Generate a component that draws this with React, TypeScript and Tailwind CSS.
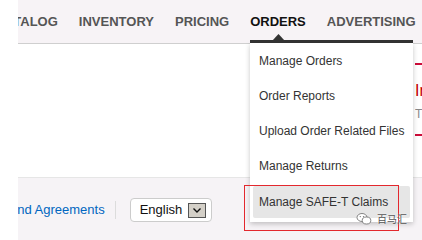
import React from "react";

const navFont = { fontFamily: '"Liberation Sans", Arial, sans-serif' };

export default function App() {
  const items = [
    "Manage Orders",
    "Order Reports",
    "Upload Order Related Files",
    "Manage Returns",
  ];
  return (
    <div
      className="relative w-[422px] h-[240px] overflow-hidden bg-white flex"
      style={navFont}
    >
      <div className="w-[18px] shrink-0 bg-white" />
      <div className="flex-1 flex flex-col overflow-hidden">
        {/* Nav bar */}
        <div className="h-[44px] shrink-0 bg-[#f7f3f6] border-b border-[#cfcfcf] flex items-center overflow-hidden">
          <div className="flex items-center gap-[21px] ml-[-22.5px] text-[13px] font-bold text-[#555] whitespace-nowrap">
            <span>CATALOG</span>
            <span>INVENTORY</span>
            <span>PRICING</span>
            <span className="text-[#111]">ORDERS</span>
            <span>ADVERTISING</span>
          </div>
        </div>
        {/* Main content */}
        <div className="h-[133px] shrink-0 flex">
          <div className="w-[397px] shrink-0" />
          <div className="flex-1 flex flex-col overflow-hidden whitespace-nowrap">
            <div className="h-[2px] bg-[#cc0c39] mt-[19px]" />
            <div className="text-[16px] text-[#c40000] leading-[18px] mt-[17px]">
              Important
            </div>
            <div className="text-[12px] text-[#888] leading-[14px] mt-[7px]">
              The
            </div>
            <div className="h-[2px] bg-[#cc0c39] mt-[13px]" />
          </div>
        </div>
        {/* Footer */}
        <div className="flex-1 bg-[#f6f3f6] border-t border-[#e6e6e6] flex items-start pt-[20px] overflow-hidden">
          <div className="flex items-center ml-[-8px] h-[24px]">
            <span className="text-[13px] text-[#0066c0] whitespace-nowrap">
              and Agreements
            </span>
            <div className="w-px h-[18px] bg-[#dcdcdc] ml-[10px]" />
            <div className="ml-[14px] w-[82px] h-[24px] bg-white border border-[#cccccc] rounded-[4px] flex items-center pl-[9px] pr-[5px] justify-between">
              <span className="text-[13px] text-[#111]">English</span>
              <div className="w-[18px] h-[15px] bg-[#d4d0c8] border border-[#555] flex items-center justify-center">
                <svg width="10" height="7" viewBox="0 0 10 7">
                  <path d="M1.5 1.5 L5 5 L8.5 1.5" fill="none" stroke="#111" strokeWidth="1.4" />
                </svg>
              </div>
            </div>
          </div>
        </div>
      </div>

      {/* Active tab underline & caret */}
      <div className="absolute left-[250px] top-[40px] w-[163px] h-[3px] bg-[#333]" />
      <svg className="absolute left-[272px] top-[34px]" width="13" height="7" viewBox="0 0 13 7">
        <path d="M0 7 L6.5 0 L13 7 Z" fill="#333" />
      </svg>

      {/* Dropdown menu */}
      <div className="absolute left-[250px] top-[43px] w-[163px] bg-white shadow-[0_2px_5px_rgba(0,0,0,0.22)] px-[3px] pb-[4px]">
        {items.map((t) => (
          <div key={t} className="h-[35px] flex items-center px-[6px] text-[12px] text-[#333] whitespace-nowrap">
            {t}
          </div>
        ))}
        <div className="h-[32px] mt-[3px] flex items-center px-[6px] text-[12px] text-[#333] bg-[#e6e6e6] rounded-[2px] whitespace-nowrap">
          Manage SAFE-T Claims
        </div>
      </div>

      {/* Red highlight box */}
      <div className="absolute left-[244px] top-[185px] w-[155px] h-[46px] border border-[#e3282e]" />

      {/* Watermark */}
      <div className="absolute left-[356px] top-[212px] flex items-center gap-[5px] whitespace-nowrap">
        <svg width="16" height="14" viewBox="0 0 16 14">
          <ellipse cx="6" cy="5.5" rx="5" ry="4" fill="white" stroke="#777" strokeWidth="0.9" />
          <ellipse cx="10.5" cy="8.5" rx="4.3" ry="3.5" fill="white" stroke="#777" strokeWidth="0.9" />
          <circle cx="4.3" cy="4.6" r="0.7" fill="#777" />
          <circle cx="7.5" cy="4.6" r="0.7" fill="#777" />
        </svg>
        <span className="text-[10px] text-[#555] leading-none" style={{ fontFamily: '"Noto Sans CJK SC", sans-serif', textShadow: "0 0 2px #fff" }}>
          百马汇
        </span>
      </div>
    </div>
  );
}
